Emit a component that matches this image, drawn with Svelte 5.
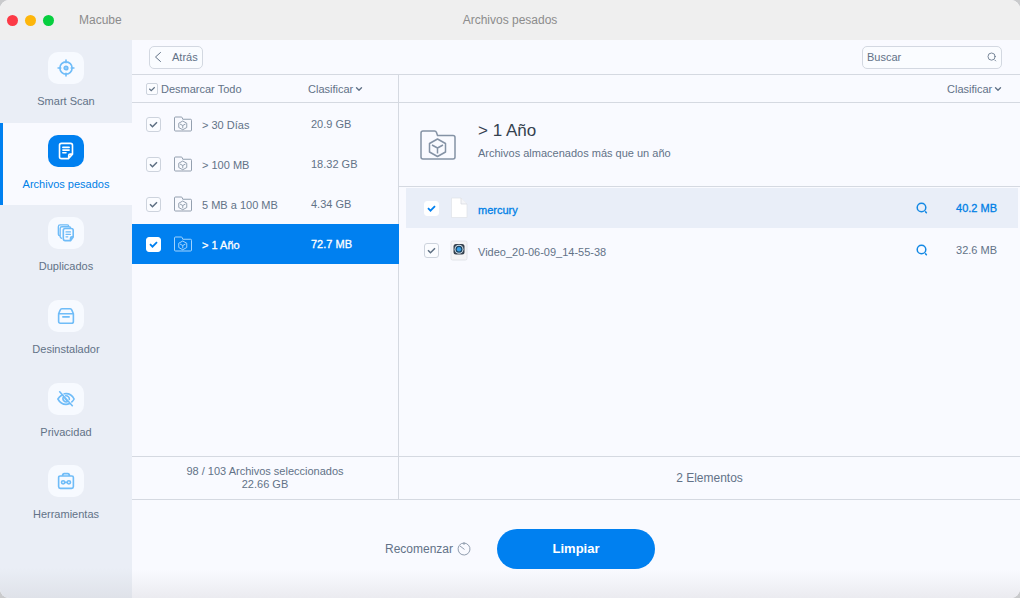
<script>
  let sections = [
    { id: 'scan', label: 'Smart Scan' },
    { id: 'large', label: 'Archivos pesados' },
    { id: 'dupes', label: 'Duplicados' },
    { id: 'uninstall', label: 'Desinstalador' },
    { id: 'privacy', label: 'Privacidad' },
    { id: 'tools', label: 'Herramientas' }
  ];
  let active = $state('large');

  let groups = $state([
    { name: '> 30 Días', size: '20.9 GB', checked: true },
    { name: '> 100 MB', size: '18.32 GB', checked: true },
    { name: '5 MB a 100 MB', size: '4.34 GB', checked: true },
    { name: '> 1 Año', size: '72.7 MB', checked: true }
  ]);
  let current = $state(3);

  let files = $state([
    { name: 'mercury', size: '40.2 MB', kind: 'doc', checked: true },
    { name: 'Video_20-06-09_14-55-38', size: '32.6 MB', kind: 'video', checked: true }
  ]);
  let currentFile = $state(0);
  let all = $state(true);

  function toggleAll() {
    groups.forEach((g) => (g.checked = all));
  }
</script>

{#snippet folder()}
  <svg class="folder" viewBox="0 0 36 30" fill="none" stroke="currentColor" stroke-linejoin="round" aria-hidden="true">
    <path d="M3 1h11.5q1.500 0 2 1.500l1 3H33q2 0 2 2V27q0 2-2 2H3q-2 0-2-2V3q0-2 2-2Z" />
    <path d="M17.500 9l8 4.500v8.500l-8 4.500-8-4.500v-8.500ZM12 15l5.500 3 5.500-3M17.500 18v5.500" />
  </svg>
{/snippet}

{#snippet chevron()}
  <svg class="chevron" viewBox="0 0 8 6" fill="none" stroke="currentColor" stroke-width="1.400" stroke-linecap="round" stroke-linejoin="round" aria-hidden="true">
    <path d="M1.500 1.700 4 4.200l2.500-2.500" />
  </svg>
{/snippet}

{#snippet lens()}
  <svg viewBox="0 0 12 12" fill="none" stroke="currentColor" stroke-linecap="round" aria-hidden="true">
    <circle cx="5.500" cy="5.500" r="4.300" /><path d="M9.600 9.900l.8.800" />
  </svg>
{/snippet}

{#snippet sectionIcon(id)}
  <svg viewBox="0 0 20 20" fill="none" stroke="currentColor" stroke-width="1.800" stroke-linecap="round" stroke-linejoin="round" aria-hidden="true">
    {#if id === 'scan'}
      <circle cx="10" cy="10" r="6.800" /><circle cx="10" cy="10" r="2" fill="currentColor" fill-opacity=".7" />
      <path d="M10 1.200v3M10 15.800v3M1.200 10h3M15.800 10h3" />
    {:else if id === 'large'}
      <path d="M5 1.500h10q2.200 0 2.200 2.200v9.800L12.700 18.500H5q-2.200 0-2.200-2.200V3.700q0-2.200 2.200-2.200ZM17 13.500h-2.500q-1.500 0-1.500 1.500v3M6.500 6h7M6.500 9h7M6.500 12h3.500" />
    {:else if id === 'dupes'}
      <path d="M9 5h7q2 0 2 2v7.500L15 18.500H9q-2 0-2-2V7q0-2 2-2ZM18 14.200h-1.500q-1.500 0-1.500 1.500v2.300" />
      <path d="M10 8.800h5M10 11.500h5M10 14.200h2" stroke-width="1.400" />
      <path d="M5 15.800q-1.500-.3-1.500-1.800V5q0-2 2-2h8q1.500 0 1.500 1.500M3 13.200Q1.500 13 1.500 11.500V3q0-2 2-2h8Q13 1 13 2.500" stroke-width="1.500" />
    {:else if id === 'uninstall'}
      <path d="M1.800 7.500h16.400V16q0 2-2 2H3.800q-2 0-2-2ZM1.800 7.500l1.700-4Q4 2 5.500 2h9q1.500 0 2 1.500l1.700 4M6.500 11h7" />
    {:else if id === 'privacy'}
      <path d="M5.500 5.500Q2.500 7.300 1 10q3.200 6 9 6 2 0 4-1M8 4.200Q15.500 3 19 10q-1 2-2.500 3.200M7.300 7.500a3.700 3.700 0 0 0 5 5.200M9.700 6.400a3.700 3.700 0 0 1 4 4M8.800 9.500l2 2M3 2l14 15.500" />
    {:else}
      <path d="M3.500 4.500h13q1.700 0 1.700 1.700V16q0 2-2 2.200H3.800q-2-.2-2-2.200V6.200q0-1.700 1.700-1.700ZM6 4.300Q6.300 1.800 8 1.800h4q1.700 0 2 2.500" />
      <circle cx="6.800" cy="11.500" r="1.800" /><circle cx="13.200" cy="11.500" r="1.800" /><path d="M8.800 11.500h2.400" />
    {/if}
  </svg>
{/snippet}

<div class="window">
  <header class="titlebar">
    <div class="brand">
      <span class="lights"><i class="close"></i><i class="min"></i><i class="max"></i></span>
      <span>Macube</span>
    </div>
    <h1>Archivos pesados</h1>
  </header>

  <div class="body">
    <nav class="sidebar">
      {#each sections as s}
        <button class="section" class:active={active === s.id} onclick={() => (active = s.id)}>
          <span class="tile">{@render sectionIcon(s.id)}</span>
          <span>{s.label}</span>
        </button>
      {/each}
    </nav>

    <main>
      <div class="toolbar">
        <button class="back">
          <svg viewBox="0 0 8 12" fill="none" stroke="currentColor" stroke-linecap="round" aria-hidden="true"><path d="M6.500 1.500 1.500 6l5 4.500" /></svg>
          Atrás
        </button>
        <label class="search">
          <input type="text" placeholder="Buscar" aria-label="Buscar" />
          {@render lens()}
        </label>
      </div>

      <div class="panes">
        <section class="left">
          <div class="head">
            <label class="all"><input class="small" type="checkbox" bind:checked={all} onchange={toggleAll} />Desmarcar Todo</label>
            <label class="sort"><select aria-label="Clasificar"><option>Clasificar</option></select>{@render chevron()}</label>
          </div>
          <ul class="groups">
            {#each groups as g, i}
              <li class:selected={i === current}>
                <input type="checkbox" aria-label={g.name} bind:checked={g.checked} />
                <button class="pick" onclick={() => (current = i)}>
                  {@render folder()}
                  <span class="name">{g.name}</span>
                  <span class="size">{g.size}</span>
                </button>
              </li>
            {/each}
          </ul>
          <footer>
            <p>98 / 103 Archivos seleccionados</p>
            <p>22.66 GB</p>
          </footer>
        </section>

        <section class="right">
          <div class="head end">
            <label class="sort"><select aria-label="Clasificar"><option>Clasificar</option></select>{@render chevron()}</label>
          </div>
          <div class="summary">
            {@render folder()}
            <div>
              <h2>&gt; 1 Año</h2>
              <p>Archivos almacenados más que un año</p>
            </div>
          </div>
          <ul class="files">
            {#each files as f, i}
              <li class:selected={i === currentFile}>
                <input type="checkbox" aria-label={f.name} bind:checked={f.checked} />
                {#if f.kind === 'doc'}
                  <svg class="file" viewBox="0 0 18 22" aria-hidden="true">
                    <path d="M1.500 1h9.500l6 6v13.500H1.500Z" fill="#fff" stroke="#dfe2e8" stroke-width=".7" />
                    <path d="M11 1v6h6" fill="#f4f5f8" stroke="#d5d8df" stroke-width=".7" />
                  </svg>
                {:else}
                  <svg class="file" viewBox="0 0 18 22" aria-hidden="true">
                    <rect x="1" y="2" width="16" height="19" rx="1.500" fill="#f4f4f5" stroke="#dddfe4" stroke-width=".8" />
                    <rect x="3.500" y="5" width="11" height="10.500" rx="2.500" fill="#36414d" />
                    <circle cx="9" cy="10.200" r="4.500" fill="#d5e2eb" />
                    <circle cx="9" cy="10.200" r="3.500" fill="#18425f" />
                    <circle cx="9" cy="10.200" r="2.200" fill="#3aa0e6" />
                  </svg>
                {/if}
                <button class="filename" onclick={() => (currentFile = i)}>{f.name}</button>
                <button class="reveal" aria-label="Buscar">{@render lens()}</button>
                <span class="size">{f.size}</span>
              </li>
            {/each}
          </ul>
          <footer class="count"><p>2 Elementos</p></footer>
        </section>
      </div>

      <div class="actions">
        <button class="restart">
          Recomenzar
          <svg viewBox="0 0 14 14" fill="none" stroke="currentColor" stroke-width=".9" stroke-linecap="round" aria-hidden="true">
            <path d="M7 1a6 6 0 1 1-5.200 3M7 1v1.500M3 4l4.200 3.200" /><path d="M7 1Q4 1 2.500 3" />
          </svg>
        </button>
        <button class="clean">Limpiar</button>
      </div>
    </main>
  </div>
</div>

<style>
  :global(body) {
    margin: 0;
    background: #c9cacc;
  }
  .window,
  .window :global(*) {
    box-sizing: border-box;
  }
  .window {
    min-height: 100vh;
    display: flex;
    flex-direction: column;
    overflow: hidden;
    border-radius: 9px;
    font: 11px/14px "Liberation Sans", Arial, Helvetica, sans-serif;
    color: #627287;
    background: #f9faff;
  }
  h1, h2, p, ul {
    margin: 0;
    padding: 0;
    font-weight: 400;
    list-style: none;
  }
  button, select, input {
    font: inherit;
    color: inherit;
    margin: 0;
    padding: 0;
    border: 0;
    background: none;
  }
  button {
    cursor: pointer;
  }

  .titlebar {
    height: 40px;
    flex: none;
    display: grid;
    grid-template-columns: 1fr auto 1fr;
    align-items: center;
    background: #efefef;
    color: #8c8c8c;
    font-size: 12px;
  }
  h1 {
    font-size: 12px;
  }
  .brand, .lights {
    display: flex;
    align-items: center;
  }
  .brand {
    gap: 25px;
    padding-left: 7px;
  }
  .lights {
    gap: 7px;
  }
  .lights i {
    width: 11px;
    height: 11px;
    border-radius: 50%;
  }
  .close { background: #fc3a46; }
  .min { background: #fdb60b; }
  .max { background: #07cf3f; }

  .body {
    flex: 1;
    display: flex;
  }
  .sidebar {
    width: 132px;
    flex: none;
    display: grid;
    grid-auto-rows: 1fr;
    padding-bottom: 62px;
    background: linear-gradient(to top, #dfe2e9, #eaeef6 30px);
  }
  .section {
    display: flex;
    flex-direction: column;
    align-items: center;
    gap: 10px;
    padding: 12px 0;
    line-height: 15px;
  }
  .tile {
    display: grid;
    place-items: center;
    width: 36px;
    height: 32px;
    border-radius: 10px;
    background: #f7faff;
    color: #6fbcf8;
  }
  .tile svg {
    width: 18px;
    height: 18px;
  }
  .active {
    background: #f9faff;
    box-shadow: inset 3px 0 #0080f0;
    color: #0080e6;
  }
  .active .tile {
    background: #0080f0;
    color: #fff;
  }

  main {
    flex: 1;
    min-width: 0;
    display: flex;
    flex-direction: column;
    background: linear-gradient(to top, #ebebf0, #f9faff 28px);
  }
  .toolbar {
    height: 35px;
    flex: none;
    display: flex;
    align-items: center;
    justify-content: space-between;
    padding: 0 18px 0 17px;
    border-bottom: 1px solid #d5d9e1;
  }
  .back, .search {
    display: flex;
    align-items: center;
    height: 23px;
    border: 1px solid #d3d8e1;
    border-radius: 5px;
    background: #fafcff;
  }
  .back {
    gap: 10px;
    padding: 0 4px;
  }
  .back svg {
    width: 8px;
    height: 12px;
  }
  .search {
    width: 140px;
    padding: 0 4px;
  }
  .search input {
    flex: 1;
    min-width: 0;
    outline: 0;
  }
  .search input::placeholder {
    color: #627287;
    opacity: 1;
  }
  .search svg {
    width: 10px;
    height: 10px;
  }

  .panes {
    flex: 1;
    display: grid;
    grid-template-columns: 266px 1fr;
    border-bottom: 1px solid #d5d9e1;
  }
  .left, .right {
    display: flex;
    flex-direction: column;
    min-width: 0;
  }
  .right {
    border-left: 1px solid #d5d9e1;
  }
  .head {
    height: 28px;
    flex: none;
    display: flex;
    align-items: center;
    justify-content: space-between;
    padding: 0 35px 0 14px;
    border-bottom: 1px solid #d5d9e1;
  }
  .end {
    justify-content: flex-end;
    padding-right: 18px;
  }
  .all, .sort {
    display: flex;
    align-items: center;
    gap: 3px;
  }
  .sort {
    gap: 1px;
  }
  select {
    appearance: none;
    outline: 0;
  }
  .chevron {
    width: 8px;
    height: 6px;
  }
  input[type='checkbox'] {
    appearance: none;
    flex: none;
    width: 15px;
    height: 15px;
    border: 1px solid #cdd3dd;
    border-radius: 3px;
    background-color: #fbfcff;
  }
  input[type='checkbox']:checked {
    background-image: url("data:image/svg+xml,%3Csvg xmlns='http://www.w3.org/2000/svg' viewBox='0 0 13 13' fill='none' stroke='%235f7084' stroke-width='1.500'%3E%3Cpath d='M3 6.200l2.500 2.500L10 4.200'/%3E%3C/svg%3E");
  }
  .selected input[type='checkbox'] {
    border-color: #fff;
    background-color: #fff;
  }
  .selected input[type='checkbox']:checked {
    background-image: url("data:image/svg+xml,%3Csvg xmlns='http://www.w3.org/2000/svg' viewBox='0 0 13 13' fill='none' stroke='%230080f0' stroke-width='1.800'%3E%3Cpath d='M3 6.200l2.500 2.500L10 4.200'/%3E%3C/svg%3E");
  }
  input.small[type='checkbox'] {
    width: 12px;
    height: 12px;
    border-radius: 2px;
  }

  .groups {
    flex: 1;
    padding-top: 1px;
  }
  .groups li {
    display: flex;
    align-items: center;
    height: 40px;
    gap: 13px;
    padding-left: 14px;
    margin-right: -1px;
  }
  .pick {
    flex: 1;
    display: grid;
    grid-template-columns: 18px 99px 1fr;
    column-gap: 10px;
    align-items: center;
    height: 100%;
    text-align: left;
  }
  .groups .folder {
    width: 18px;
    height: 16px;
    stroke-width: 1.800;
    color: #8895a6;
  }
  .groups .name {
    padding-top: 2px;
  }
  .groups .selected {
    position: relative;
    background: #0080f0;
    color: #fff;
  }
  .groups .selected .folder {
    color: #b3dcff;
  }
  .selected .name,
  .selected .size,
  .selected .filename {
    -webkit-text-stroke: 0.300px;
  }

  footer {
    height: 43px;
    flex: none;
    display: flex;
    flex-direction: column;
    justify-content: center;
    text-align: center;
    line-height: 13px;
    border-top: 1px solid #d5d9e1;
  }
  .count {
    font-size: 12px;
  }

  .summary {
    height: 84px;
    flex: none;
    display: flex;
    align-items: center;
    gap: 22px;
    padding-left: 21px;
    border-bottom: 1px solid #d5d9e1;
  }
  .summary .folder {
    width: 36px;
    height: 30px;
    stroke-width: 1.500;
    color: #8492a5;
  }
  .summary div {
    padding-bottom: 10px;
  }
  h2 {
    font-size: 17px;
    line-height: 24px;
    margin-bottom: 3px;
    color: #35424f;
  }
  .files {
    flex: 1;
    display: flex;
    flex-direction: column;
    gap: 2px;
    padding: 1px 2px 0 7px;
  }
  .files li {
    display: flex;
    align-items: center;
    height: 40px;
    padding: 0 21px 0 18px;
  }
  .files .selected {
    background: #e9eef8;
    color: #0080e6;
  }
  .file {
    width: 18px;
    height: 22px;
    margin: 0 10px 0 11px;
  }
  .filename {
    flex: 1;
    text-align: left;
    padding-top: 3px;
  }
  .reveal {
    color: #1489e4;
    height: 12px;
  }
  .reveal svg {
    display: block;
    width: 12px;
    height: 12px;
    stroke-width: 1.500;
  }
  .files .size {
    width: 69px;
    text-align: right;
  }

  .actions {
    height: 98px;
    flex: none;
    display: grid;
    grid-template-columns: 1fr auto 1fr;
    align-items: center;
    column-gap: 26px;
  }
  .restart {
    justify-self: end;
    display: flex;
    align-items: center;
    gap: 4px;
    font-size: 12px;
  }
  .restart svg {
    width: 14px;
    height: 14px;
    color: #8492a5;
  }
  .clean {
    width: 158px;
    height: 40px;
    border-radius: 20px;
    background: #0080f0;
    color: #fff;
    font-size: 13px;
    font-weight: 700;
  }
</style>
